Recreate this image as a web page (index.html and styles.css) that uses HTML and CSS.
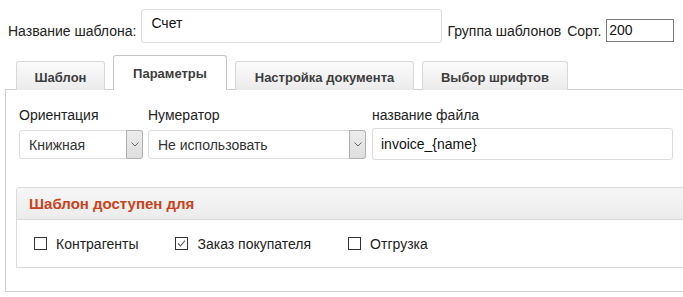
FILE: index.html
```html
<!DOCTYPE html>
<html lang="ru">
<head>
<meta charset="utf-8">
<title>Шаблон</title>
<link rel="stylesheet" href="styles.css">
</head>
<body>
<div class="page">
  <div class="head-row">
    <span class="lbl name-lbl">Название шаблона:</span>
    <div class="inp name-inp">Счет</div>
    <span class="lbl group-lbl">Группа шаблонов</span>
    <span class="lbl sort-lbl">Сорт.</span>
    <div class="sort-inp">200</div>
  </div>

  <div class="tabs">
    <div class="tab tab-template">Шаблон</div>
    <div class="tab active tab-params">Параметры</div>
    <div class="tab tab-doc">Настройка документа</div>
    <div class="tab tab-fonts">Выбор шрифтов</div>
  </div>

  <div class="panel">
    <div class="fields">
      <div class="flabel">Ориентация</div>
      <div class="flabel">Нумератор</div>
      <div class="flabel">название файла</div>
      <div class="select">
        <span class="sel-text">Книжная</span>
        <span class="sel-btn"><svg width="8" height="5" viewBox="0 0 8 5"><path d="M0.5 0.5 L4 4 L7.5 0.5" fill="none" stroke="#666" stroke-width="1"/></svg></span>
      </div>
      <div class="select">
        <span class="sel-text">Не использовать</span>
        <span class="sel-btn"><svg width="8" height="5" viewBox="0 0 8 5"><path d="M0.5 0.5 L4 4 L7.5 0.5" fill="none" stroke="#666" stroke-width="1"/></svg></span>
      </div>
      <div class="inp file-inp">invoice_{name}</div>
    </div>

    <div class="section">
      <div class="section-head">Шаблон доступен для</div>
      <div class="section-body">
        <label class="chk"><span class="box"></span>Контрагенты</label>
        <label class="chk"><span class="box"><svg width="11" height="11" viewBox="0 0 11 11"><path d="M2 5.5 L4.5 8 L9 2.5" fill="none" stroke="#555" stroke-width="1.1"/></svg></span>Заказ покупателя</label>
        <label class="chk"><span class="box"></span>Отгрузка</label>
      </div>
    </div>
  </div>
</div>
</body>
</html>
```
FILE: styles.css
```css
html, body {
  margin: 0;
  padding: 0;
  background: #fff;
  overflow: hidden;
}
body {
  font-family: "Liberation Sans", Arial, sans-serif;
  font-size: 14px;
  line-height: 16px;
  color: #222;
}
.page {
  width: 683px;
  height: 297px;
  overflow: hidden;
}
.head-row {
  display: flex;
  align-items: flex-start;
  padding: 9px 0 0 8px;
}
.lbl {
  margin-top: 14px;
  color: #222;
}
.name-lbl {
  margin-right: 5px;
}
.inp {
  box-sizing: border-box;
  border: 1px solid #dcdcdc;
  border-radius: 3px;
  background: #fff;
  color: #111;
}
.name-inp {
  width: 301px;
  height: 34px;
  padding: 5px 9px;
}
.group-lbl {
  margin-left: 5px;
}
.sort-lbl {
  margin-left: 6px;
  margin-right: 5px;
}
.sort-inp {
  box-sizing: border-box;
  width: 68px;
  height: 23px;
  margin-top: 10px;
  border: 1px solid #7a7a7a;
  padding: 2px 2px;
  color: #111;
}
.tabs {
  display: flex;
  align-items: flex-end;
  gap: 8px;
  padding-left: 16px;
  margin-top: 12px;
  position: relative;
  z-index: 1;
  margin-bottom: -1px;
}
.tab {
  box-sizing: border-box;
  height: 29px;
  padding-top: 8px;
  text-align: center;
  border: 1px solid #d8d8d8;
  border-bottom: none;
  border-radius: 3px 3px 0 0;
  background: linear-gradient(#fbfbfb, #ebebeb);
  font-size: 13px;
  font-weight: bold;
  color: #3d3d3d;
  white-space: nowrap;
}
.tab.active {
  height: 35px;
  padding-top: 10px;
  border-color: #c4c4c4;
  background: #fff;
}
.tab-template { width: 89px; }
.tab-params { width: 114px; }
.tab-doc { width: 179px; }
.tab-fonts { width: 146px; }
.panel {
  width: 760px;
  margin-left: 5px;
  border: 1px solid #cfcfcf;
  padding: 17px 0 23px 10px;
}
.fields {
  display: grid;
  grid-template-columns: 124px 218px 302px;
  column-gap: 5px;
  row-gap: 5px;
  align-items: center;
  margin-left: 3px;
}
.fields .flabel:nth-child(3),
.fields .file-inp {
  margin-left: 1px;
}
.flabel {
  color: #222;
  align-self: end;
}
.select {
  box-sizing: border-box;
  height: 29px;
  display: flex;
  border: 1px solid #dcdcdc;
  border-radius: 3px;
  background: #fff;
}
.sel-text {
  flex: 1;
  padding: 6px 0 0 9px;
  color: #333;
}
.sel-btn {
  width: 15px;
  display: flex;
  align-items: center;
  justify-content: center;
  border: 1px solid #b0b0b0;
  margin: -1px -1px -1px 0;
  border-radius: 0 3px 3px 0;
  background: linear-gradient(#ececec, #dedede);
}
.file-inp {
  height: 32px;
  padding: 7px 8px;
}
.section {
  margin-top: 27px;
  border: 1px solid #dadada;
  border-radius: 3px 3px 0 0;
}
.section-head {
  height: 32px;
  box-sizing: border-box;
  padding: 8px 12px 0;
  background: linear-gradient(#f6f6f6, #ececec);
  border-bottom: 1px solid #d6d6d6;
  color: #c9421b;
  font-size: 15px;
  font-weight: bold;
}
.section-body {
  height: 47px;
  display: flex;
  align-items: center;
  gap: 37px;
  padding-left: 17px;
}
.chk {
  display: flex;
  align-items: center;
  gap: 9px;
  color: #222;
}
.box {
  box-sizing: border-box;
  width: 13px;
  height: 13px;
  border: 1px solid #333;
  background: #fff;
  display: flex;
  align-items: center;
  justify-content: center;
}
```
